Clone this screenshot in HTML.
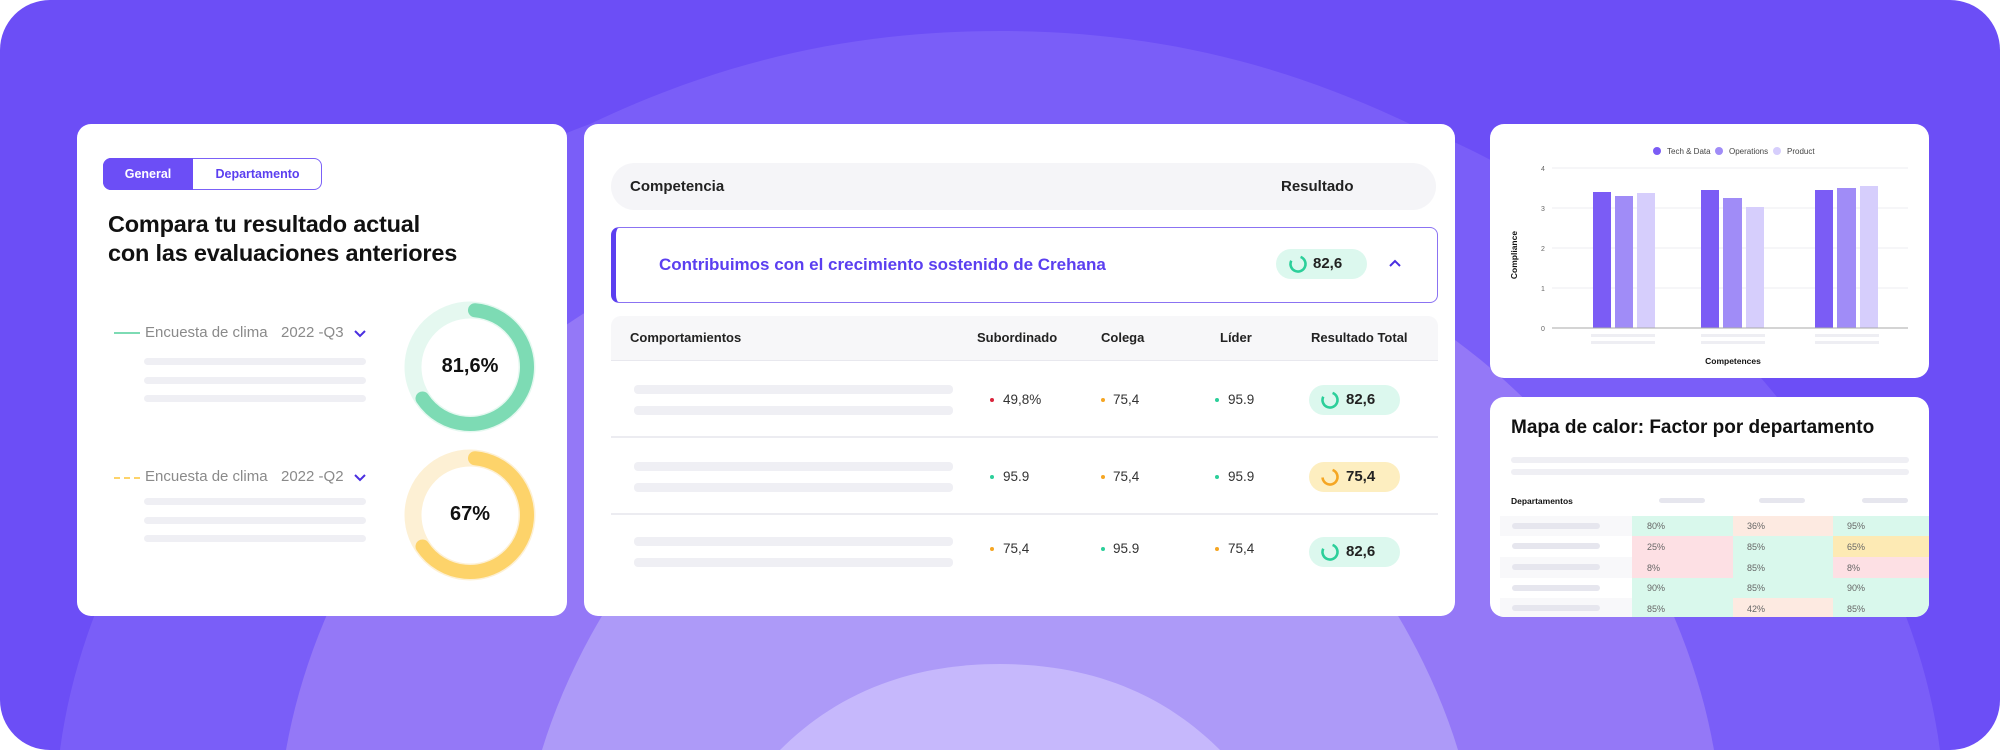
<!DOCTYPE html>
<html><head><meta charset="utf-8"><style>
*{margin:0;padding:0;box-sizing:border-box}
html,body{width:2000px;height:750px;overflow:hidden}
body{background:#fff;font-family:"Liberation Sans",sans-serif;position:relative}
#bg{position:absolute;left:0;top:0;width:2000px;height:750px;border-radius:50px;overflow:hidden;background:#6c4ef6}
.card{position:absolute;background:#fff;border-radius:14px;overflow:hidden}
.a{position:absolute;white-space:nowrap}
.bar{position:absolute;background:#efeff4;border-radius:4px}
.b{font-weight:bold}
</style></head><body>
<div id="bg">
<svg width="2000" height="750" style="position:absolute;left:0;top:0">
 <path d="M60 750 C100 450 380 200 590 124 C720 62 850 31 1000 31 C1150 31 1280 62 1410 124 C1620 200 1900 450 1940 750 Z" fill="#7a5ef8"/>
 <path d="M286 750 C330 500 560 200 1000 200 C1440 200 1670 500 1714 750 Z" fill="#9478f7"/>
 <path d="M542 750 C600 560 780 350 1000 350 C1220 350 1400 560 1458 750 Z" fill="#ad9af8"/>
 <path d="M780 750 C830 700 900 664 1000 664 C1100 664 1170 700 1220 750 Z" fill="#c6b8fc"/>
</svg>
</div>

<!-- Left card -->
<div class="card" style="left:77px;top:124px;width:490px;height:492px">
 <div class="a" style="left:26px;top:34px;width:219px;height:32px;border:1.5px solid #7b61f7;border-radius:8px"></div>
 <div class="a b" style="left:26px;top:34px;width:90px;height:32px;background:#6c4ef6;border-radius:8px 0 0 8px;color:#fff;font-size:12.5px;line-height:32px;text-align:center">General</div>
 <div class="a b" style="left:116px;top:34px;width:129px;height:32px;color:#5b3ff0;font-size:12.5px;line-height:32px;text-align:center">Departamento</div>
 <div class="a" style="left:31px;top:86px;font-size:23.5px;line-height:29px;color:#111;font-weight:bold;letter-spacing:-0.2px">Compara tu resultado actual<br>con las evaluaciones anteriores</div>

 <div class="a" style="left:37px;top:208px;width:26px;height:2px;background:#7ddbb4"></div>
 <div class="a" style="left:68px;top:200px;font-size:15px;color:#8a8a8a">Encuesta de clima</div>
 <div class="a" style="left:204px;top:200px;font-size:15px;color:#8a8a8a">2022 -Q3</div>
 <svg class="a" style="left:276px;top:205px" width="14" height="9"><path d="M2 2 L7 7 L12 2" fill="none" stroke="#4a2fe0" stroke-width="2"/></svg>
 <div class="bar" style="left:67px;top:234px;width:222px;height:7px"></div>
 <div class="bar" style="left:67px;top:253px;width:222px;height:7px"></div>
 <div class="bar" style="left:67px;top:271px;width:222px;height:7px"></div>

 <div class="a" style="left:37px;top:353px;width:26px;border-top:2px dashed #fdd36a"></div>
 <div class="a" style="left:68px;top:344px;font-size:15px;color:#8a8a8a">Encuesta de clima</div>
 <div class="a" style="left:204px;top:344px;font-size:15px;color:#8a8a8a">2022 -Q2</div>
 <svg class="a" style="left:276px;top:349px" width="14" height="9"><path d="M2 2 L7 7 L12 2" fill="none" stroke="#4a2fe0" stroke-width="2"/></svg>
 <div class="bar" style="left:67px;top:374px;width:222px;height:7px"></div>
 <div class="bar" style="left:67px;top:393px;width:222px;height:7px"></div>
 <div class="bar" style="left:67px;top:411px;width:222px;height:7px"></div>

 <svg class="a" style="left:326px;top:176px" width="134" height="134">
  <circle cx="67" cy="67" r="57" fill="none" stroke="#e5f8f0" stroke-width="17"/>
  <circle cx="67" cy="67" r="57" fill="none" stroke="#7ddbb4" stroke-width="14" stroke-linecap="round" stroke-dasharray="230 400" transform="rotate(-85 67 67)"/>
 </svg>
 <div class="a b" style="left:326px;top:231px;width:134px;text-align:center;font-size:20px;color:#111">81,6%</div>
 <svg class="a" style="left:326px;top:324px" width="134" height="134">
  <circle cx="67" cy="67" r="57" fill="none" stroke="#fdf0d4" stroke-width="17"/>
  <circle cx="67" cy="67" r="57" fill="none" stroke="#fdd36a" stroke-width="14" stroke-linecap="round" stroke-dasharray="230 400" transform="rotate(-85 67 67)"/>
 </svg>
 <div class="a b" style="left:326px;top:379px;width:134px;text-align:center;font-size:20px;color:#111">67%</div>
</div>

<!-- Middle card -->
<div class="card" style="left:584px;top:124px;width:871px;height:492px">
 <div class="a" style="left:27px;top:39px;width:825px;height:47px;background:#f5f5f8;border-radius:24px"></div>
 <div class="a b" style="left:46px;top:54px;font-size:15px;color:#222">Competencia</div>
 <div class="a b" style="left:697px;top:54px;font-size:15px;color:#222">Resultado</div>

 <div class="a" style="left:27px;top:103px;width:827px;height:76px;border:1.5px solid #8b73f2;border-left:5px solid #5b3ff0;border-radius:8px"></div>
 <div class="a b" style="left:75px;top:131px;font-size:17px;color:#5b3ff0">Contribuimos con el crecimiento sostenido de Crehana</div>
 <div class="a" style="left:692px;top:125px;width:91px;height:30px;background:#dcf8ee;border-radius:15px"></div>
 <svg class="a" style="left:704px;top:130px" width="20" height="20"><circle cx="10" cy="10" r="7.5" fill="none" stroke="#2ccf9a" stroke-width="2.6" stroke-dasharray="36 50" transform="rotate(-70 10 10)"/></svg>
 <div class="a b" style="left:729px;top:131px;font-size:15px;color:#222">82,6</div>
 <svg class="a" style="left:804px;top:135px" width="14" height="9"><path d="M2 7 L7 2 L12 7" fill="none" stroke="#4a2fe0" stroke-width="2"/></svg>

 <div class="a" style="left:27px;top:192px;width:827px;height:45px;background:#f7f7f9;border-radius:10px 10px 0 0;border-bottom:1.5px solid #e8e8ee"></div>
 <div class="a b" style="left:46px;top:206px;font-size:13px;color:#222">Comportamientos</div>
 <div class="a b" style="left:393px;top:206px;font-size:13px;color:#222">Subordinado</div>
 <div class="a b" style="left:517px;top:206px;font-size:13px;color:#222">Colega</div>
 <div class="a b" style="left:636px;top:206px;font-size:13px;color:#222">Líder</div>
 <div class="a b" style="left:727px;top:206px;font-size:13px;color:#222">Resultado Total</div>

 <div class="a" style="left:27px;top:312px;width:827px;height:1.5px;background:#ececf1"></div>
 <div class="a" style="left:27px;top:389px;width:827px;height:1.5px;background:#ececf1"></div>

 <div class="bar" style="left:50px;top:261px;width:319px;height:9px"></div>
 <div class="bar" style="left:50px;top:282px;width:319px;height:9px"></div>
 <div class="bar" style="left:50px;top:338px;width:319px;height:9px"></div>
 <div class="bar" style="left:50px;top:359px;width:319px;height:9px"></div>
 <div class="bar" style="left:50px;top:413px;width:319px;height:9px"></div>
 <div class="bar" style="left:50px;top:434px;width:319px;height:9px"></div>

 <div class="a" style="left:406px;top:274px;width:4px;height:4px;border-radius:2px;background:#d9243c"></div>
 <div class="a" style="left:419px;top:268px;font-size:13.5px;color:#333">49,8%</div>
 <div class="a" style="left:517px;top:274px;width:4px;height:4px;border-radius:2px;background:#f5a623"></div>
 <div class="a" style="left:529px;top:268px;font-size:13.5px;color:#333">75,4</div>
 <div class="a" style="left:631px;top:274px;width:4px;height:4px;border-radius:2px;background:#2ccf9a"></div>
 <div class="a" style="left:644px;top:268px;font-size:13.5px;color:#333">95.9</div>
 <div class="a" style="left:725px;top:261px;width:91px;height:30px;background:#dcf8ee;border-radius:15px"></div>
 <svg class="a" style="left:736px;top:266px" width="20" height="20"><circle cx="10" cy="10" r="7.5" fill="none" stroke="#2ccf9a" stroke-width="2.6" stroke-dasharray="36 50" transform="rotate(-70 10 10)"/></svg>
 <div class="a b" style="left:762px;top:267px;font-size:15px;color:#222">82,6</div>

 <div class="a" style="left:406px;top:351px;width:4px;height:4px;border-radius:2px;background:#2ccf9a"></div>
 <div class="a" style="left:419px;top:345px;font-size:13.5px;color:#333">95.9</div>
 <div class="a" style="left:517px;top:351px;width:4px;height:4px;border-radius:2px;background:#f5a623"></div>
 <div class="a" style="left:529px;top:345px;font-size:13.5px;color:#333">75,4</div>
 <div class="a" style="left:631px;top:351px;width:4px;height:4px;border-radius:2px;background:#2ccf9a"></div>
 <div class="a" style="left:644px;top:345px;font-size:13.5px;color:#333">95.9</div>
 <div class="a" style="left:725px;top:338px;width:91px;height:30px;background:#fdeec0;border-radius:15px"></div>
 <svg class="a" style="left:736px;top:343px" width="20" height="20"><circle cx="10" cy="10" r="7.5" fill="none" stroke="#f5a623" stroke-width="2.6" stroke-dasharray="32 50" transform="rotate(-70 10 10)"/></svg>
 <div class="a b" style="left:762px;top:344px;font-size:15px;color:#222">75,4</div>

 <div class="a" style="left:406px;top:423px;width:4px;height:4px;border-radius:2px;background:#f5a623"></div>
 <div class="a" style="left:419px;top:417px;font-size:13.5px;color:#333">75,4</div>
 <div class="a" style="left:517px;top:423px;width:4px;height:4px;border-radius:2px;background:#2ccf9a"></div>
 <div class="a" style="left:529px;top:417px;font-size:13.5px;color:#333">95.9</div>
 <div class="a" style="left:631px;top:423px;width:4px;height:4px;border-radius:2px;background:#f5a623"></div>
 <div class="a" style="left:644px;top:417px;font-size:13.5px;color:#333">75,4</div>
 <div class="a" style="left:725px;top:413px;width:91px;height:30px;background:#dcf8ee;border-radius:15px"></div>
 <svg class="a" style="left:736px;top:418px" width="20" height="20"><circle cx="10" cy="10" r="7.5" fill="none" stroke="#2ccf9a" stroke-width="2.6" stroke-dasharray="36 50" transform="rotate(-70 10 10)"/></svg>
 <div class="a b" style="left:762px;top:419px;font-size:15px;color:#222">82,6</div>
</div>

<!-- Chart card -->
<div class="card" style="left:1490px;top:124px;width:439px;height:254px">
 <svg class="a" style="left:0;top:0" width="439" height="254" font-family="Liberation Sans, sans-serif">
  <circle cx="167" cy="27" r="4" fill="#7b5cf5"/><text x="177" y="30" font-size="8" fill="#444">Tech &amp; Data</text>
  <circle cx="229" cy="27" r="4" fill="#a08cf7"/><text x="239" y="30" font-size="8" fill="#444">Operations</text>
  <circle cx="287" cy="27" r="4" fill="#d6cefc"/><text x="297" y="30" font-size="8" fill="#444">Product</text>
  <g stroke="#eeeef2" stroke-width="1"><line x1="62" y1="44" x2="418" y2="44"/><line x1="62" y1="84" x2="418" y2="84"/><line x1="62" y1="124" x2="418" y2="124"/><line x1="62" y1="164" x2="418" y2="164"/></g>
  <g font-size="7" fill="#666"><text x="51" y="47">4</text><text x="51" y="87">3</text><text x="51" y="127">2</text><text x="51" y="167">1</text><text x="51" y="207">0</text></g>
  <rect x="103" y="68" width="18" height="136" fill="#7b5cf5"/><rect x="125" y="72" width="18" height="132" fill="#a08cf7"/><rect x="147" y="69" width="18" height="135" fill="#d6cefc"/>
  <rect x="211" y="66" width="18" height="138" fill="#7b5cf5"/><rect x="233" y="74" width="19" height="130" fill="#a08cf7"/><rect x="256" y="83" width="18" height="121" fill="#d6cefc"/>
  <rect x="325" y="66" width="18" height="138" fill="#7b5cf5"/><rect x="347" y="64" width="19" height="140" fill="#a08cf7"/><rect x="370" y="62" width="18" height="142" fill="#d6cefc"/>
  <line x1="62" y1="204" x2="418" y2="204" stroke="#aaa" stroke-width="1"/>
  <g fill="#eeeef3"><rect x="101" y="210" width="64" height="3"/><rect x="101" y="217" width="64" height="3"/><rect x="211" y="210" width="64" height="3"/><rect x="211" y="217" width="64" height="3"/><rect x="325" y="210" width="64" height="3"/><rect x="325" y="217" width="64" height="3"/></g>
  <text x="243" y="240" font-size="8.5" font-weight="bold" text-anchor="middle" fill="#111">Competences</text>
  <text transform="translate(27 131) rotate(-90)" font-size="8.5" font-weight="bold" text-anchor="middle" fill="#111">Compliance</text>
 </svg>
</div>

<!-- Heatmap card -->
<div class="card" style="left:1490px;top:397px;width:439px;height:220px">
 <div class="a b" style="left:21px;top:20px;font-size:19px;color:#111">Mapa de calor: Factor por departamento</div>
 <div class="bar" style="left:21px;top:60px;width:398px;height:6px"></div>
 <div class="bar" style="left:21px;top:72px;width:398px;height:6px"></div>
 <div class="a b" style="left:21px;top:99px;font-size:8.5px;color:#111">Departamentos</div>
 <div class="bar" style="left:169px;top:101px;width:46px;height:5px;background:#e6e6ee"></div>
 <div class="bar" style="left:269px;top:101px;width:46px;height:5px;background:#e6e6ee"></div>
 <div class="bar" style="left:372px;top:101px;width:46px;height:5px;background:#e6e6ee"></div>
 <svg class="a" style="left:0;top:0" width="439" height="220" font-family="Liberation Sans, sans-serif" font-size="9" fill="#666">
  <rect x="10" y="119" width="132" height="20" fill="#f8f8fa"/><rect x="10" y="160" width="132" height="21" fill="#f8f8fa"/><rect x="10" y="201" width="132" height="20" fill="#f8f8fa"/>
  <g fill="#e6e6ee"><rect x="22" y="126" width="88" height="6" rx="3"/><rect x="22" y="146" width="88" height="6" rx="3"/><rect x="22" y="167" width="88" height="6" rx="3"/><rect x="22" y="188" width="88" height="6" rx="3"/><rect x="22" y="208" width="88" height="6" rx="3"/></g>
  <rect x="142" y="119" width="101" height="20" fill="#d9f8ec"/><rect x="243" y="119" width="100" height="20" fill="#fdeae1"/><rect x="343" y="119" width="96" height="20" fill="#d9f8ec"/>
  <rect x="142" y="139" width="101" height="21" fill="#fde0e4"/><rect x="243" y="139" width="100" height="21" fill="#d9f8ec"/><rect x="343" y="139" width="96" height="21" fill="#fdeab4"/>
  <rect x="142" y="160" width="101" height="21" fill="#fde0e4"/><rect x="243" y="160" width="100" height="21" fill="#d9f8ec"/><rect x="343" y="160" width="96" height="21" fill="#fde0e4"/>
  <rect x="142" y="181" width="101" height="20" fill="#d9f8ec"/><rect x="243" y="181" width="100" height="20" fill="#d9f8ec"/><rect x="343" y="181" width="96" height="20" fill="#d9f8ec"/>
  <rect x="142" y="201" width="101" height="20" fill="#d9f8ec"/><rect x="243" y="201" width="100" height="20" fill="#fdeae1"/><rect x="343" y="201" width="96" height="20" fill="#d9f8ec"/>
  <text x="157" y="132">80%</text><text x="257" y="132">36%</text><text x="357" y="132">95%</text>
  <text x="157" y="153">25%</text><text x="257" y="153">85%</text><text x="357" y="153">65%</text>
  <text x="157" y="174">8%</text><text x="257" y="174">85%</text><text x="357" y="174">8%</text>
  <text x="157" y="194">90%</text><text x="257" y="194">85%</text><text x="357" y="194">90%</text>
  <text x="157" y="215">85%</text><text x="257" y="215">42%</text><text x="357" y="215">85%</text>
 </svg>
</div>
</body></html>
